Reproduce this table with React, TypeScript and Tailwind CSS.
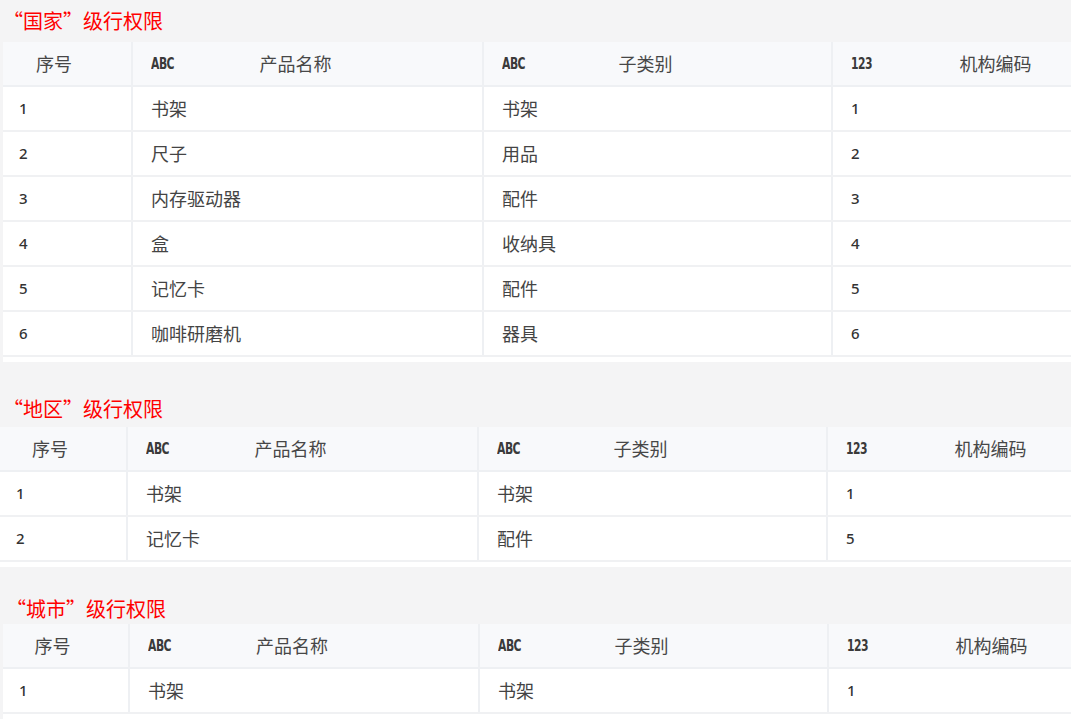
import React from "react";

type Row = { id: number; name: string; sub: string; code: number };

const countryRows: Row[] = [
  { id: 1, name: "书架", sub: "书架", code: 1 },
  { id: 2, name: "尺子", sub: "用品", code: 2 },
  { id: 3, name: "内存驱动器", sub: "配件", code: 3 },
  { id: 4, name: "盒", sub: "收纳具", code: 4 },
  { id: 5, name: "记忆卡", sub: "配件", code: 5 },
  { id: 6, name: "咖啡研磨机", sub: "器具", code: 6 },
];

const regionRows: Row[] = [
  { id: 1, name: "书架", sub: "书架", code: 1 },
  { id: 2, name: "记忆卡", sub: "配件", code: 5 },
];

const cityRows: Row[] = [{ id: 1, name: "书架", sub: "书架", code: 1 }];

const cjk = "font-['Noto_Sans_CJK_SC',sans-serif]";
const num = "font-['Noto_Sans','Noto_Sans_CJK_SC',sans-serif]";

function TypeTag({ label }: { label: string }) {
  return (
    <span className="w-[24px] shrink-0 mt-[2px] font-['DejaVu_Sans_Condensed','DejaVu_Sans',sans-serif] font-bold text-[15px] leading-none tracking-[-0.6px] text-[#3a3a3a] scale-x-[0.8] origin-left">
      {label}
    </span>
  );
}

function HeadCell({ tag, label, width }: { tag: string; label: string; width: string }) {
  return (
    <div className={`${width} shrink-0 h-full flex items-center pl-[18px] border-r-2 border-[#eef0f3]`}>
      <TypeTag label={tag} />
      <span className="flex-1 text-center pr-[66px]">{label}</span>
    </div>
  );
}

function PermTable({ rows, cols, left }: { rows: Row[]; cols: string[]; left: string }) {
  return (
    <div className={`${left} bg-white w-[1200px]`}>
      <div className={`flex h-[45px] bg-[#f8f9fb] border-b-2 border-[#eef0f3] text-[18px] text-[#474747] ${cjk}`}>
        <div className={`${cols[0]} shrink-0 h-full flex items-center justify-center pr-[26px] border-r-2 border-[#eef0f3]`}>
          序号
        </div>
        <HeadCell tag="ABC" label="产品名称" width={cols[1]} />
        <HeadCell tag="ABC" label="子类别" width={cols[2]} />
        <HeadCell tag="123" label="机构编码" width={cols[3]} />
      </div>
      {rows.map((r) => (
        <div key={r.id} className="flex h-[45px] border-b-2 border-[#f0f1f3] text-[#444]">
          <div className={`${cols[0]} shrink-0 flex items-center pl-[16px] border-r-2 border-[#eef0f3] text-[15px] font-medium text-[#333] ${num}`}>
            {r.id}
          </div>
          <div className={`${cols[1]} shrink-0 flex items-center pl-[18px] border-r-2 border-[#eef0f3] text-[18px] ${cjk}`}>
            {r.name}
          </div>
          <div className={`${cols[2]} shrink-0 flex items-center pl-[18px] border-r-2 border-[#eef0f3] text-[18px] ${cjk}`}>
            {r.sub}
          </div>
          <div className={`${cols[3]} shrink-0 flex items-center pl-[18px] text-[15px] font-medium text-[#333] ${num}`}>
            {r.code}
          </div>
        </div>
      ))}
      <div className="h-[5px] bg-white" />
    </div>
  );
}

function Title({ text, box }: { text: string; box: string }) {
  return (
    <div className={`${box} flex items-center text-[20px] text-[#ff0000] ${cjk}`}>
      {text}
    </div>
  );
}

export default function App() {
  const colsA = ["w-[130px]", "w-[351px]", "w-[349px]", "w-[351px]"];
  const colsB = ["w-[128px]", "w-[351px]", "w-[349px]", "w-[351px]"];
  const colsC = ["w-[127px]", "w-[350px]", "w-[349px]", "w-[351px]"];
  return (
    <div className="w-[1071px] h-[719px] overflow-hidden bg-[#f4f4f5]">
      <Title text="“国家”级行权限" box="h-[42px] pl-[3px]" />
      <PermTable rows={countryRows} cols={colsA} left="ml-[3px]" />
      <div className="h-[28px]" />
      <Title text="“地区”级行权限" box="h-[37px] pl-[3px]" />
      <PermTable rows={regionRows} cols={colsB} left="ml-0" />
      <div className="h-[27px]" />
      <Title text="“城市”级行权限" box="h-[30px] pl-[6px]" />
      <PermTable rows={cityRows} cols={colsC} left="ml-[3px]" />
    </div>
  );
}
